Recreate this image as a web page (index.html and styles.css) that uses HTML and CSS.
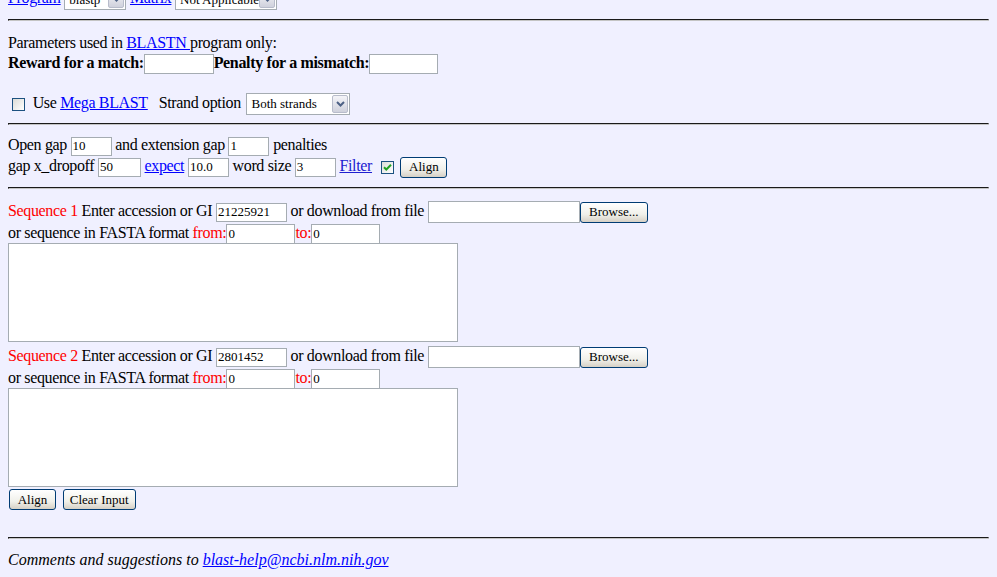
FILE: index.html
```html
<!DOCTYPE html>
<html lang="en">
<head>
  <meta charset="UTF-8">
  <title>BLAST 2 Sequences</title>
  <link rel="stylesheet" href="styles.css">
</head>
<body>
  <div class="row top-row">
    <a href="#">Program</a>
    <span class="select sel-program">blastp<span class="arrow"><svg width="9" height="6" viewBox="0 0 9 6"><path d="M1 1l3.5 3.5L8 1" fill="none" stroke="#4d6185" stroke-width="2"/></svg></span></span>
    <a href="#">Matrix</a>
    <span class="select sel-matrix">Not Applicable<span class="arrow"><svg width="9" height="6" viewBox="0 0 9 6"><path d="M1 1l3.5 3.5L8 1" fill="none" stroke="#4d6185" stroke-width="2"/></svg></span></span>
  </div>

  <hr class="rule">

  <div class="params">
    <div class="row line">Parameters used in <a href="#">BLASTN </a>program only:</div>
    <div class="row line"><b>Reward for a match:</b><input class="field w-reward" type="text"><b>Penalty for a mismatch:</b><input class="field w-penalty" type="text"></div>
  </div>

  <div class="row mega">
    <span class="checkbox"></span>
    Use <a href="#">Mega BLAST</a>&nbsp;&nbsp;&nbsp;Strand option
    <span class="select sel-strand">Both strands<span class="arrow"><svg width="9" height="6" viewBox="0 0 9 6"><path d="M1 1l3.5 3.5L8 1" fill="none" stroke="#4d6185" stroke-width="2"/></svg></span></span>
  </div>

  <hr class="rule rule-tight">

  <div class="gaps">
    <div class="row line">Open gap <input class="field w-small" type="text" value="10"> and extension gap <input class="field w-small" type="text" value="1"> penalties</div>
    <div class="row line">gap x_dropoff <input class="field w-drop" type="text" value="50"> <a href="#">expect</a> <input class="field w-small" type="text" value="10.0"> word size <input class="field w-small" type="text" value="3"> <a class="visited" href="#">Filter</a> <span class="checkbox checked"><svg width="9" height="9" viewBox="0 0 9 9"><path d="M1 4.2l2.3 2.3L8 1.8" fill="none" stroke="#21a121" stroke-width="2"/></svg></span> <button class="btn w-align">Align</button></div>
  </div>

  <hr class="rule">

  <div class="sequence first-seq">
    <div class="row seq-head"><span class="red">Sequence 1</span> Enter accession or GI <input class="field w-gi" type="text" value="21225921"> or download from file <input class="field w-file" type="text"><button class="btn w-browse">Browse...</button></div>
    <div class="row seq-range">or sequence in FASTA format <span class="red">from:</span><input class="field w-range" type="text" value="0"><span class="red">to:</span><input class="field w-range" type="text" value="0"></div>
    <textarea class="fasta"></textarea>
  </div>

  <div class="sequence">
    <div class="row seq-head"><span class="red">Sequence 2</span> Enter accession or GI <input class="field w-gi" type="text" value="2801452"> or download from file <input class="field w-file" type="text"><button class="btn w-browse">Browse...</button></div>
    <div class="row seq-range">or sequence in FASTA format <span class="red">from:</span><input class="field w-range" type="text" value="0"><span class="red">to:</span><input class="field w-range" type="text" value="0"></div>
    <textarea class="fasta"></textarea>
  </div>

  <div class="row actions">
    <button class="btn w-align">Align</button>
    <button class="btn w-clear">Clear Input</button>
  </div>

  <hr class="rule footer-rule">

  <p class="footer">Comments and suggestions to <a href="#">blast-help@ncbi.nlm.nih.gov</a></p>
</body>
</html>
```

FILE: styles.css
```css
body {
  font-family: "Liberation Serif", "Times New Roman", serif;
  font-size: 16px;
  letter-spacing: -0.35px;
  background: #f0f0ff;
  color: #000;
  margin: 0 8px;
  overflow: hidden;
}
a { color: #0000ff; }
a.visited { color: #2020d0; }
.red { color: #ff0000; }

.row { white-space: nowrap; }
.line { height: 20px; line-height: 20px; }

.top-row { height: 20px; line-height: 20px; margin-top: -12px; }

.rule {
  height: 0;
  margin: 11px 0 0;
  border-style: solid;
  border-width: 1px;
  border-color: #1a1a1a #c4c4c4 #c4c4c4 #1a1a1a;
}
.rule-tight { margin-top: 9px; }

.params { margin-top: 12px; }
.mega { height: 22px; line-height: 22px; margin-top: 19px; }
.gaps { margin-top: 10px; }
.gaps .line:last-child { height: 21px; line-height: 21px; }

/* text inputs */
.field {
  box-sizing: border-box;
  height: 19px;
  margin: 0;
  padding: 0 1px;
  border: 1px solid #a5acb2;
  background: #fff;
  font-family: "Liberation Serif", "Times New Roman", serif;
  font-size: 13px;
  letter-spacing: 0;
  vertical-align: middle;
}
.w-reward { width: 70px; height: 20px; }
.w-penalty { width: 69px; height: 20px; }
.w-small { width: 41px; }
.w-drop { width: 43px; }
.w-gi { width: 71px; }
.w-file { width: 152px; height: 22px; }
.w-range { width: 69px; height: 20px; }

/* fake select boxes */
.select {
  display: inline-block;
  box-sizing: border-box;
  position: relative;
  height: 21px;
  line-height: 19px;
  padding-left: 4px;
  border: 1px solid #a5acb2;
  background: #fff;
  font-size: 13px;
  letter-spacing: 0;
  vertical-align: middle;
}
.select .arrow {
  position: absolute;
  right: 1px;
  top: 1px;
  bottom: 1px;
  width: 16px;
  box-sizing: border-box;
  border: 1px solid #b8bccb;
  border-radius: 2px;
  background: linear-gradient(#f4f4f8, #cfd1dc);
  display: flex;
  align-items: center;
  justify-content: center;
}
.sel-program { width: 62px; }
.sel-matrix { width: 102px; }
.sel-strand { width: 104px; height: 22px; line-height: 20px; margin-left: 2px; }

/* checkboxes */
.checkbox {
  display: inline-flex;
  align-items: center;
  justify-content: center;
  box-sizing: border-box;
  width: 13px;
  height: 13px;
  border: 1px solid #1c5180;
  background: linear-gradient(135deg, #dcdcd7, #fff);
  vertical-align: middle;
}
.mega .checkbox { margin: 0 4px 0 4px; }
.checkbox.checked { margin: 0 3px 0 5px; }

/* buttons */
.btn {
  box-sizing: border-box;
  height: 21px;
  margin: 0;
  padding: 0;
  border: 1px solid #003c74;
  border-radius: 3px;
  background: linear-gradient(#ffffff, #f0f0ea 60%, #d6d0c5);
  font-family: "Liberation Serif", "Times New Roman", serif;
  font-size: 13px;
  letter-spacing: 0;
  color: #000;
  vertical-align: middle;
}
.w-align { width: 47px; }
.w-browse { width: 68px; }
.w-clear { width: 73px; }

.first-seq { margin-top: 10px; }
.seq-head { height: 23px; line-height: 23px; }
.seq-range { height: 21px; line-height: 21px; }
.fasta {
  display: block;
  box-sizing: border-box;
  width: 450px;
  height: 99px;
  margin: 0 0 2px;
  border: 1px solid #a5acb2;
  background: #fff;
  resize: none;
}

.actions { height: 21px; margin-top: 2px; padding-left: 1px; }
.actions .btn { margin-right: 3px; }

.footer-rule { margin-top: 27px; }
.footer { margin: 11px 0 0; font-style: italic; letter-spacing: 0; line-height: 20px; }
```
